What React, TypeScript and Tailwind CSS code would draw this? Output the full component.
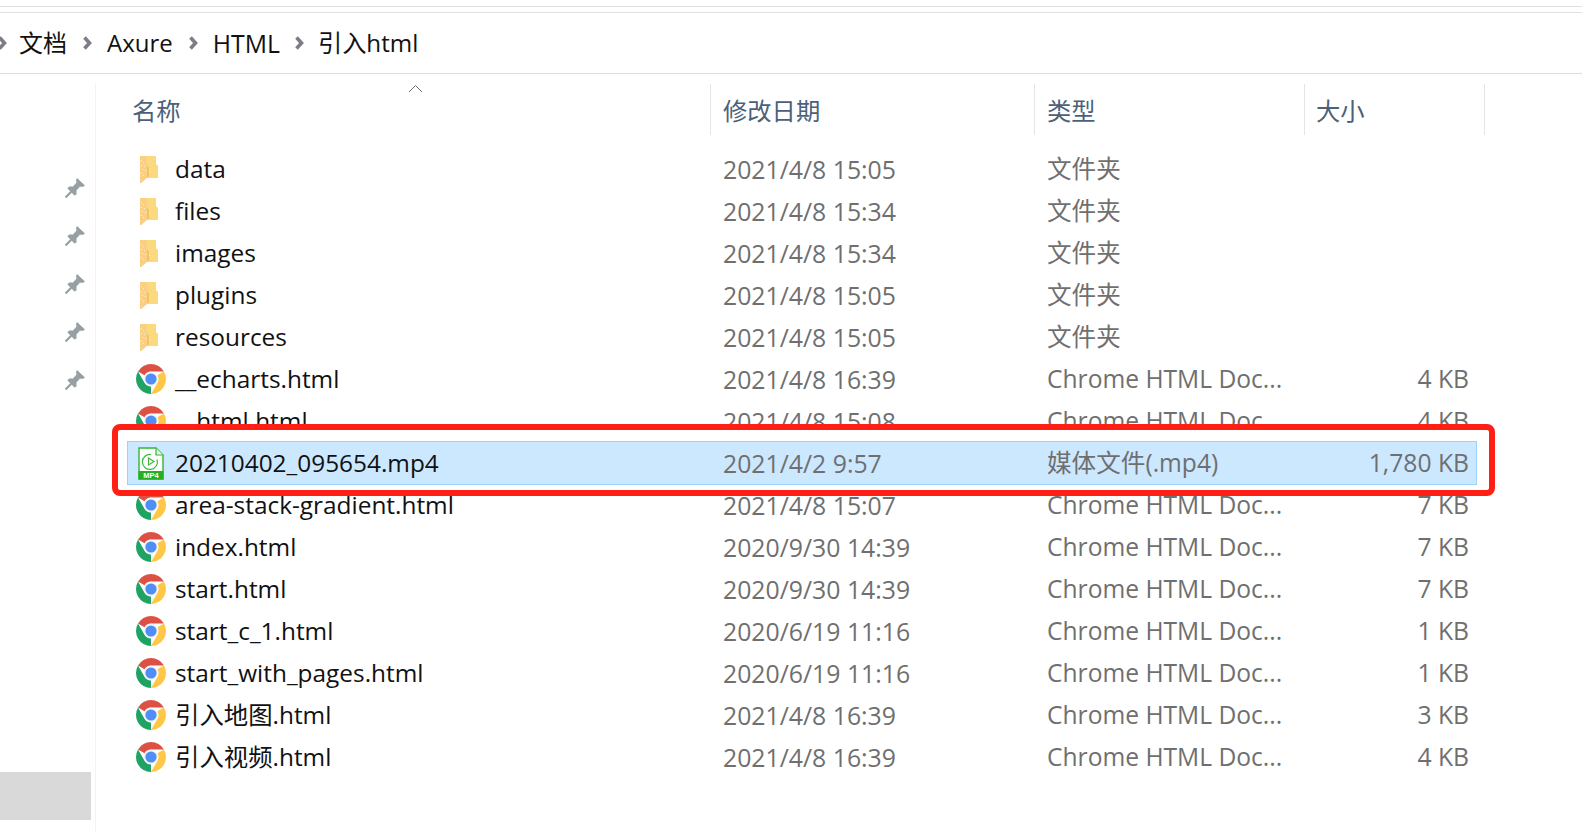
import React from "react";

const FONT = '"Open Sans","Noto Sans CJK SC",sans-serif';

type Row = { name: string; date: string; type: string; size: string; icon: "folder" | "chrome" | "mp4" };

const rows: Row[] = [
  { name: "data", date: "2021/4/8 15:05", type: "文件夹", size: "", icon: "folder" },
  { name: "files", date: "2021/4/8 15:34", type: "文件夹", size: "", icon: "folder" },
  { name: "images", date: "2021/4/8 15:34", type: "文件夹", size: "", icon: "folder" },
  { name: "plugins", date: "2021/4/8 15:05", type: "文件夹", size: "", icon: "folder" },
  { name: "resources", date: "2021/4/8 15:05", type: "文件夹", size: "", icon: "folder" },
  { name: "__echarts.html", date: "2021/4/8 16:39", type: "Chrome HTML Doc...", size: "4 KB", icon: "chrome" },
  { name: "__html.html", date: "2021/4/8 15:08", type: "Chrome HTML Doc...", size: "4 KB", icon: "chrome" },
  { name: "20210402_095654.mp4", date: "2021/4/2 9:57", type: "媒体文件(.mp4)", size: "1,780 KB", icon: "mp4" },
  { name: "area-stack-gradient.html", date: "2021/4/8 15:07", type: "Chrome HTML Doc...", size: "7 KB", icon: "chrome" },
  { name: "index.html", date: "2020/9/30 14:39", type: "Chrome HTML Doc...", size: "7 KB", icon: "chrome" },
  { name: "start.html", date: "2020/9/30 14:39", type: "Chrome HTML Doc...", size: "7 KB", icon: "chrome" },
  { name: "start_c_1.html", date: "2020/6/19 11:16", type: "Chrome HTML Doc...", size: "1 KB", icon: "chrome" },
  { name: "start_with_pages.html", date: "2020/6/19 11:16", type: "Chrome HTML Doc...", size: "1 KB", icon: "chrome" },
  { name: "引入地图.html", date: "2021/4/8 16:39", type: "Chrome HTML Doc...", size: "3 KB", icon: "chrome" },
  { name: "引入视频.html", date: "2021/4/8 16:39", type: "Chrome HTML Doc...", size: "4 KB", icon: "chrome" },
];

function Chevron() {
  return (
    <svg width="12" height="14" viewBox="0 0 12 14" className="shrink-0">
      <path d="M3.5 1.5 L8.5 7 L3.5 12.5" fill="none" stroke="#7d7d85" strokeWidth="3.6" />
    </svg>
  );
}

function Pin() {
  return (
    <svg width="22" height="22" viewBox="0 0 22 22">
      <path d="M13 1 L21 8.5 L18.5 10 L16 9.5 L12.5 13.5 L12.5 17.5 L10.5 18.5 L3.5 11.5 L5 9.5 L9 9.5 L12.5 5.5 L12 3 Z" fill="#96a0a3" />
      <path d="M7.5 14.5 L1.5 20.5" stroke="#96a0a3" strokeWidth="2.2" />
    </svg>
  );
}

function Folder() {
  return (
    <svg width="20" height="28" viewBox="0 0 20 28" className="mr-[4px]">
      <path d="M2 1 H17 V9 L19 11 V23 H7 V23 L2 28 Z" fill="#fbd97f" />
      <path d="M1 1 H7 L8 5 V23 L2 28 H1 Z" fill="#f8cf83" />
      <path d="M8 10 L10 13 V22 H8 Z" fill="#f3c166" />
      <path d="M2 5h1v1H2zM4 7h1v1H4zM2 10h1v1H2zM5 11h1v1H5zM3 14h1v1H3zM6 15h1v1H6zM2 18h1v1H2zM4 20h1v1H4zM10 16h1v1h-1z" fill="#fff0c8" />
    </svg>
  );
}

function Chrome() {
  const red = "M3.01 8.5 A15 15 0 0 1 28.99 8.5 L16 8.5 A7.5 7.5 0 0 0 9.5 12.25 Z";
  return (
    <svg width="32" height="32" viewBox="0 0 32 32">
      <circle cx="16" cy="16" r="15" fill="#fff" />
      <path d={red} fill="#dd5145" />
      <path d={red} fill="#ffc745" transform="rotate(120 16 16)" />
      <path d={red} fill="#1ea362" transform="rotate(240 16 16)" />
      <circle cx="16" cy="16" r="7.2" fill="#f1f3f5" />
      <circle cx="16" cy="16" r="5.6" fill="#4f8ef7" />
    </svg>
  );
}

function Mp4() {
  return (
    <svg width="26" height="33" viewBox="0 0 26 33">
      <path d="M1 1 H18 L25 8 V32 H1 Z" fill="#fff" stroke="#2eb82e" strokeWidth="1.4" />
      <path d="M18 1 V8 H25" fill="#e6f6e6" stroke="#2eb82e" strokeWidth="1.2" />
      <rect x="0.5" y="24" width="25" height="8.5" fill="#22b022" />
      <text x="13" y="31.3" textAnchor="middle" fontSize="7.5" fontWeight="700" fill="#fff" fontFamily="Liberation Sans, sans-serif">MP4</text>
      <path d="M19 12.5 A7.5 7.5 0 1 1 13 7.5" fill="none" stroke="#3cb83c" strokeWidth="1.2" />
      <path d="M10.5 11 L16 14.5 L10.5 18 Z" fill="none" stroke="#3cb83c" strokeWidth="1.2" />
    </svg>
  );
}

function RowIcon({ kind }: { kind: Row["icon"] }) {
  if (kind === "folder") return <Folder />;
  if (kind === "chrome") return <Chrome />;
  return <Mp4 />;
}

function FileRow({ row }: { row: Row }) {
  const selected = row.icon === "mp4";
  return (
    <div className={`relative h-[42px] grid grid-cols-[584px_324px_269px_173px] items-center ${selected ? "z-10" : ""}`}>
      {selected && (
        <>
          <div className="absolute left-[-15px] right-[-18px] top-[-18px] bottom-[-12px] bg-white border-[6px] border-[#ff1f14] rounded-[8px]" />
          <div className="absolute inset-x-0 top-[-1px] bottom-[-1px] bg-[#cce8ff] border border-[#99d1ff]" />
        </>
      )}
      <div className="relative flex items-center min-w-0">
        <div className="w-[48px] flex justify-center shrink-0">
          <RowIcon kind={row.icon} />
        </div>
        <span className="text-[#111111] whitespace-pre text-[24.4px]">{row.name}</span>
      </div>
      <div className="relative pl-[12px] text-[#6f6f6f] text-[24.8px]">{row.date}</div>
      <div className="relative pl-[12px] text-[#6f6f6f] text-[24.6px]">{row.type}</div>
      <div className="relative pr-[8px] text-right text-[#6f6f6f] text-[24.7px]">{row.size}</div>
    </div>
  );
}

function HeaderCell({ label, className }: { label: string; className: string }) {
  return <div className={`h-full flex items-center pt-[2px] text-[#4c607a] text-[24.3px] ${className}`}>{label}</div>;
}

export default function App() {
  return (
    <div className="h-[832px] w-[1582px] overflow-hidden bg-white flex flex-col text-[25px] leading-[34px]" style={{ fontFamily: FONT }}>
      <div className="h-[7px] shrink-0 border-b border-[#dfdfdf]" />
      <div className="h-[6px] shrink-0 border-b border-[#dfdfdf]" />
      <div className="h-[61px] shrink-0 border-b border-[#dcdcdc] flex items-center text-[#111111] text-[24.5px]">
        <div className="ml-[-4px] mr-[11px]"><Chevron /></div>
        <span className="text-[24px]">文档</span>
        <div className="ml-[14px] mr-[14px]"><Chevron /></div>
        <span className="text-[24px]">Axure</span>
        <div className="ml-[14px] mr-[14px]"><Chevron /></div>
        <span className="text-[24.8px]">HTML</span>
        <div className="ml-[13px] mr-[13px]"><Chevron /></div>
        <span className="text-[24.2px]">引入html</span>
      </div>

      <div className="flex-1 flex min-h-0 pt-[10px]">
        <div className="w-[96px] shrink-0 border-r border-[#eef6f3] flex flex-col pb-[12px]">
          <div className="pt-[80px] w-[91px] flex flex-col items-end">
            {[0, 1, 2, 3, 4].map((i) => (
              <div key={i} className="h-[48px] pr-[5px] flex items-center"><Pin /></div>
            ))}
          </div>
          <div className="mt-auto h-[48px] w-[91px] bg-[#d9d9d9]" />
        </div>

        <div className="flex-1 min-w-0 relative">
          <div className="h-[51px] w-[1389px] flex">
            <HeaderCell label="名称" className="w-[615px] pl-[36px] border-r border-[#e5e5e5] relative" />
            <HeaderCell label="修改日期" className="w-[324px] pl-[12px] border-r border-[#e5e5e5]" />
            <HeaderCell label="类型" className="w-[270px] pl-[12px] border-r border-[#e5e5e5]" />
            <HeaderCell label="大小" className="w-[180px] pl-[11px] border-r border-[#e5e5e5]" />
          </div>
          <svg width="15" height="9" viewBox="0 0 15 9" className="absolute left-[312px] top-[0px]">
            <path d="M1 8 L7.5 1.5 L14 8" fill="none" stroke="#6b6b6b" strokeWidth="1" />
          </svg>
          <div className="ml-[31px] mt-[13px] w-[1350px]">
            {rows.map((r) => (
              <FileRow key={r.name} row={r} />
            ))}
          </div>
        </div>
      </div>
    </div>
  );
}
